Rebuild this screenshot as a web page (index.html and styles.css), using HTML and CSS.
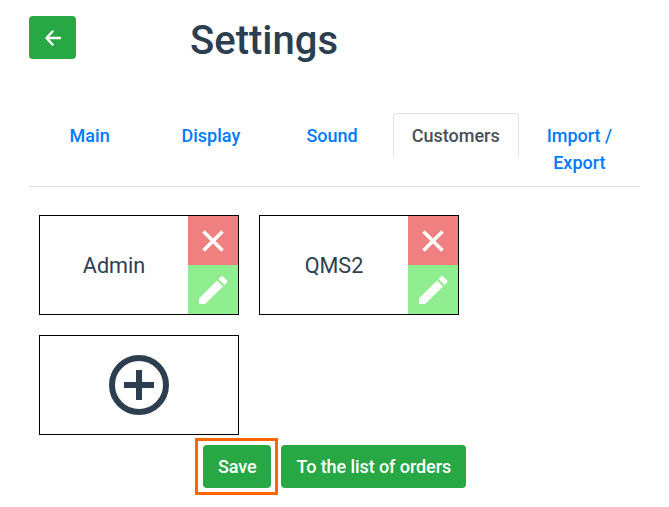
FILE: index.html
```html
<!DOCTYPE html>
<html lang="en">
<head>
<meta charset="utf-8">
<title>Settings</title>
<link rel="stylesheet" href="styles.css">
</head>
<body>
<div class="page">
  <header class="header">
    <button class="btn back" type="button" aria-label="Back">
      <svg width="20" height="20" viewBox="0 0 20 20" fill="none" stroke="#fff" stroke-width="2.500" stroke-linecap="round" stroke-linejoin="round"><path d="M17 10H3.500M9.500 3.500 3.500 10l6 6.500"/></svg>
    </button>
    <h1 class="title">Settings</h1>
  </header>
  <nav class="tabs">
    <a class="tab" href="#">Main</a>
    <a class="tab" href="#">Display</a>
    <a class="tab" href="#">Sound</a>
    <a class="tab active" href="#">Customers</a>
    <a class="tab" href="#">Import / Export</a>
  </nav>
  <section class="cards">
    <div class="card">
      <div class="name">Admin</div>
      <div class="actions">
        <div class="action del">
          <svg width="24" height="24" viewBox="0 0 24 24" fill="none" stroke="#fff" stroke-width="3.600"><path d="M2.500 2.500 21.500 21.500M21.500 2.500 2.500 21.500"/></svg>
        </div>
        <div class="action edit">
          <svg width="30" height="30" viewBox="0 0 30 30" fill="#fff"><path d="M1 23.500 19 5.500l6 6L7 29H1zM20.500 4l2.500-2.500q1-1 2 0l4 4q1 1 0 2L26.500 10z"/></svg>
        </div>
      </div>
    </div>
    <div class="card">
      <div class="name">QMS2</div>
      <div class="actions">
        <div class="action del">
          <svg width="24" height="24" viewBox="0 0 24 24" fill="none" stroke="#fff" stroke-width="3.600"><path d="M2.500 2.500 21.500 21.500M21.500 2.500 2.500 21.500"/></svg>
        </div>
        <div class="action edit">
          <svg width="30" height="30" viewBox="0 0 30 30" fill="#fff"><path d="M1 23.500 19 5.500l6 6L7 29H1zM20.500 4l2.500-2.500q1-1 2 0l4 4q1 1 0 2L26.500 10z"/></svg>
        </div>
      </div>
    </div>
    <div class="card add">
      <svg width="60" height="60" viewBox="0 0 60 60" fill="none" stroke="#2c3e50" stroke-width="6"><circle cx="30" cy="30" r="27"/><path d="M30 15V45M15 30H45"/></svg>
    </div>
  </section>
  <footer class="footer">
    <button class="btn save" type="button">Save</button>
    <button class="btn" type="button">To the list of orders</button>
  </footer>
</div>
</body>
</html>
```
FILE: styles.css
```css
* {
  box-sizing: border-box;
}

html, body {
  margin: 0;
  background: #fff;
}

body {
  font-family: Roboto, "Liberation Sans", sans-serif;
  font-size: 18px;
  line-height: 27px;
  color: #2c3e50;
}

.page {
  padding: 16px 29px 19px;
  width: 669px;
}

.header {
  display: flex;
  align-items: flex-start;
  height: 97px;
}

.title {
  margin: 1px 0 0 114px;
  font-size: 40px;
  line-height: 48px;
  font-weight: 500;
}

.btn {
  display: inline-flex;
  align-items: center;
  justify-content: center;
  height: 43px;
  padding: 0 15px;
  border: 0;
  border-radius: 4px;
  background: #28a745;
  color: #fff;
  font: 500 18px/27px Roboto, "Liberation Sans", sans-serif;
  letter-spacing: -0.08px;
}

.back {
  width: 47px;
  padding: 0;
}

.tabs {
  display: grid;
  grid-template-columns: repeat(3, 1fr) 126px 1fr;
  align-items: start;
  height: 74px;
  border-bottom: 1px solid #dee2e6;
}

.tab {
  display: block;
  padding: 8px 16px;
  border: 1px solid transparent;
  border-bottom: 0;
  border-radius: 4px 4px 0 0;
  color: #007bff;
  font-weight: 500;
  text-align: center;
  text-decoration: none;
}

.tab.active {
  border-color: #dee2e6;
  padding: 8px 0;
  color: #495057;
}

.cards {
  display: grid;
  grid-template-columns: repeat(2, 200px);
  gap: 20px;
  padding: 28px 10px 0;
}

.card {
  display: flex;
  height: 100px;
  border: 1px solid #000;
  background: #fff;
}

.name {
  flex: 1;
  align-self: center;
  font-size: 21.6px;
  text-align: center;
}

.actions {
  display: flex;
  flex-direction: column;
  width: 50px;
}

.action {
  flex: 1;
  display: flex;
  align-items: center;
  justify-content: center;
}

.del {
  background: #f08080;
}

.edit {
  background: #90ee90;
}

.add {
  align-items: center;
  justify-content: center;
}

.footer {
  display: flex;
  justify-content: center;
  gap: 10px;
  padding-top: 10px;
}

.save {
  position: relative;
}

.save::after {
  content: "";
  position: absolute;
  inset: -7px -7px -7px -8px;
  border: 3px solid #ff6600;
}
```
